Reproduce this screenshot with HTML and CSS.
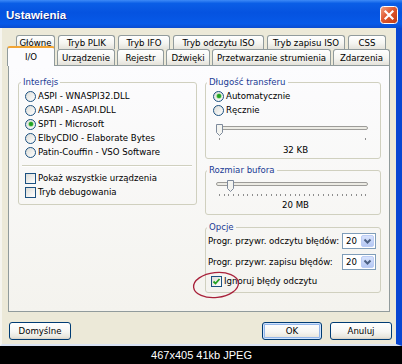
FILE: index.html
```html
<!DOCTYPE html>
<html lang="pl">
<head>
<meta charset="utf-8">
<title>Ustawienia</title>
<link rel="stylesheet" href="styles.css">
</head>
<body>
<div class="shot">
  <div class="window">
    <div class="titlebar">
      <span class="title">Ustawienia</span>
      <svg class="close" width="18" height="18" viewBox="0 0 18 18">
        <defs>
          <linearGradient id="cg" x1="0" y1="0" x2="1" y2="1">
            <stop offset="0" stop-color="#F3A586"/>
            <stop offset="0.45" stop-color="#E0582F"/>
            <stop offset="1" stop-color="#BE3912"/>
          </linearGradient>
        </defs>
        <rect x="0.5" y="0.5" width="17" height="17" rx="3" fill="url(#cg)" stroke="#FFFFFF"/>
        <path d="M5.5 5.5 L12.5 12.5 M12.5 5.5 L5.5 12.5" stroke="#FFFFFF" stroke-width="2.2" stroke-linecap="square"/>
      </svg>
    </div>
    <div class="frame">
      <div class="tabrow back">
        <div class="tab t-glowne">Główne</div>
        <div class="tab t-plik">Tryb PLIK</div>
        <div class="tab t-ifo">Tryb IFO</div>
        <div class="tab t-odczyt">Tryb odczytu ISO</div>
        <div class="tab t-zapis">Tryb zapisu ISO</div>
        <div class="tab t-css">CSS</div>
      </div>
      <div class="tabrow front">
        <div class="tab sel t-io">I/O</div>
        <div class="tab t-urz">Urządzenie</div>
        <div class="tab t-rej">Rejestr</div>
        <div class="tab t-dzw">Dźwięki</div>
        <div class="tab t-prz">Przetwarzanie strumienia</div>
        <div class="tab t-zda">Zdarzenia</div>
      </div>
      <div class="panel">
        <fieldset class="group g-interfejs">
          <legend>Interfejs</legend>
          <div class="content">
            <div class="opt"><span class="radio"></span>ASPI - WNASPI32.DLL</div>
            <div class="opt"><span class="radio"></span>ASAPI - ASAPI.DLL</div>
            <div class="opt"><span class="radio on"></span>SPTI - Microsoft</div>
            <div class="opt"><span class="radio"></span>ElbyCDIO - Elaborate Bytes</div>
            <div class="opt"><span class="radio"></span>Patin-Couffin - VSO Software</div>
            <div class="sep"></div>
            <div class="opt"><span class="check"></span>Pokaż wszystkie urządzenia</div>
            <div class="opt"><span class="check"></span>Tryb debugowania</div>
          </div>
        </fieldset>
        <div class="rightcol">
          <fieldset class="group g-transfer">
            <legend>Długość transferu</legend>
            <div class="content">
              <div class="opt"><span class="radio on"></span>Automatycznie</div>
              <div class="opt"><span class="radio"></span>Ręcznie</div>
              <div class="slider">
                <div class="track"></div>
                <div class="ticks ends"></div>
                <svg class="thumb" style="left:0px" width="7" height="12" viewBox="0 0 7 12"><path d="M0.5 0.5 H6.5 V8.5 L3.5 11.5 L0.5 8.5 Z" fill="#F4F4F0" stroke="#7E8A9C"/></svg>
              </div>
              <div class="value">32 KB</div>
            </div>
          </fieldset>
          <fieldset class="group g-bufor">
            <legend>Rozmiar bufora</legend>
            <div class="content">
              <div class="slider">
                <div class="track"></div>
                <div class="ticks many"></div>
                <svg class="thumb" style="left:11px" width="7" height="12" viewBox="0 0 7 12"><path d="M0.5 0.5 H6.5 V8.5 L3.5 11.5 L0.5 8.5 Z" fill="#F4F4F0" stroke="#7E8A9C"/></svg>
              </div>
              <div class="value">20 MB</div>
            </div>
          </fieldset>
          <fieldset class="group g-opcje">
            <legend>Opcje</legend>
            <div class="content">
              <div class="row">
                <span>Progr. przywr. odczytu błędów:</span>
                <span class="combo"><span class="cval">20</span><span class="cbtn"><svg width="11" height="12" viewBox="0 0 11 12"><path d="M2.5 4.5 L5.5 7.5 L8.5 4.5" fill="none" stroke="#4D6185" stroke-width="2"/></svg></span></span>
              </div>
              <div class="row">
                <span>Progr. przywr. zapisu błędów:</span>
                <span class="combo"><span class="cval">20</span><span class="cbtn"><svg width="11" height="12" viewBox="0 0 11 12"><path d="M2.5 4.5 L5.5 7.5 L8.5 4.5" fill="none" stroke="#4D6185" stroke-width="2"/></svg></span></span>
              </div>
              <div class="opt ign"><span class="check"><svg width="9" height="9" viewBox="0 0 9 9"><path d="M1.5 4.5 L3.5 6.5 L7.5 2" fill="none" stroke="#21A121" stroke-width="1.8"/></svg></span>Ignoruj błędy odczytu</div>
            </div>
            <svg class="mark" width="48" height="30" viewBox="0 0 48 30"><ellipse cx="24" cy="15" rx="22.5" ry="12.5" transform="rotate(-6 24 15)" fill="none" stroke="#A8213A" stroke-width="1.3"/></svg>
          </fieldset>
        </div>
      </div>
      <div class="buttons">
        <div class="btn b-def">Domyślne</div>
        <div class="spacer"></div>
        <div class="btn b-ok">OK</div>
        <div class="btn b-cancel">Anuluj</div>
      </div>
    </div>
  </div>
  <div class="caption">467x405 41kb JPEG</div>
</div>
</body>
</html>
```

FILE: styles.css
```css
* { box-sizing: border-box; }
html, body { margin: 0; padding: 0; }
body {
  width: 402px;
  height: 364px;
  overflow: hidden;
  background: #000;
  font-family: "DejaVu Sans", Tahoma, sans-serif;
  font-size: 8.6px;
  color: #000;
}
.shot { width: 402px; height: 364px; display: flex; flex-direction: column; }
.window { height: 346px; display: flex; flex-direction: column; }

.titlebar {
  height: 28px;
  flex: none;
  display: flex;
  align-items: center;
  justify-content: space-between;
  padding: 1px 5px 0 5px;
  background: linear-gradient(#3D8AF7 0%, #0A5EE6 12%, #0553E0 45%, #0759E8 85%, #0A4CD0 100%);
}
.title {
  color: #fff;
  font-family: "Liberation Sans", Arial, sans-serif;
  font-weight: bold;
  font-size: 11.5px;
  text-shadow: 1px 1px 0 #0A2A8C;
  padding-left: 1px;
}
.close { display: block; margin-right: -1px; }

.frame {
  flex: 1;
  display: flex;
  flex-direction: column;
  background: #ECE9D8;
  padding: 7px 0 4px 0;
  border-left: 2px solid #F6F5EF;
  border-right: 6px solid #0846D2;
  border-bottom: 2px solid #D9E3F5;
}

.tabrow { display: flex; }
.tabrow.back { height: 14px; padding-left: 14px; gap: 3px; }
.tabrow.front { height: 16px; padding-left: 5px; gap: 2px; }
.tab {
  flex: none;
  height: 100%;
  border: 1px solid #919B9C;
  border-bottom: none;
  border-radius: 3px 3px 0 0;
  background: linear-gradient(#FFFFFF, #F5F5F1 55%, #E4E2DA);
  display: flex;
  align-items: center;
  justify-content: center;
  white-space: nowrap;
}
.tab.sel {
  height: 20px;
  margin-top: -3px;
  margin-bottom: -1px;
  border-top: 2px solid #F2A534;
  background: #FCFCFE;
  position: relative;
  z-index: 1;
  padding-bottom: 1px;
}
.t-glowne { width: 39px; }
.t-plik { width: 57px; }
.t-ifo { width: 52px; }
.t-odczyt { width: 91px; }
.t-zapis { width: 78px; }
.t-css { width: 38px; }
.t-io { width: 48px; }
.t-urz { width: 58px; }
.t-rej { width: 47px; }
.t-dzw { width: 44px; }
.t-prz { width: 119px; }
.t-zda { width: 57px; }

.panel {
  margin-left: 6px;
  width: 382px;
  height: 247px;
  border: 1px solid #919B9C;
  background: linear-gradient(#FCFCFE, #F4F3EE);
  padding: 10px 8px 0 9px;
  display: flex;
  align-items: flex-start;
  gap: 8px;
}

.group {
  margin: 0;
  padding: 0;
  min-width: 0;
  border: 1px solid #D0D0BF;
  border-radius: 3px;
}
.group legend {
  padding: 0 2px;
  margin-left: 1px;
  line-height: 12px;
  color: #1A3A94;
}
.g-interfejs { width: 179px; }
.g-interfejs legend { margin-left: 2px; }
.g-interfejs .content { padding: 1px 0 5px 6px; }
.opt { height: 14px; display: flex; align-items: center; white-space: nowrap; }
.sep {
  height: 2px;
  margin: 6px 4px 4px -3px;
  border-top: 1px solid #D0D0BF;
  border-bottom: 1px solid #FFFFFF;
}

.radio {
  flex: none;
  width: 11px;
  height: 11px;
  border-radius: 50%;
  border: 1px solid #1C5180;
  background: linear-gradient(135deg, #DCDCD7, #FFFFFF);
  margin-right: 2px;
  position: relative;
}
.radio.on::after {
  content: "";
  position: absolute;
  left: 2.5px;
  top: 2.5px;
  width: 4px;
  height: 4px;
  border-radius: 50%;
  background: #21A121;
  box-shadow: 0 0 0 0.6px #7BD37B;
}
.check {
  flex: none;
  width: 11px;
  height: 11px;
  border: 1px solid #1C5180;
  background: linear-gradient(135deg, #DCDCD7, #FFFFFF);
  margin-right: 2px;
  display: flex;
  align-items: center;
  justify-content: center;
}
.check svg { display: block; }

.rightcol { width: 176px; display: flex; flex-direction: column; }
.g-transfer .content { padding: 1px 0 2px 7px; }
.g-bufor { margin-top: 5px; }
.g-bufor .content { padding: 1px 0 3px 7px; }
.g-opcje { margin-top: 6px; position: relative; }
.g-opcje .content { padding: 0 4px 4px 2px; }

.slider {
  position: relative;
  height: 20px;
  width: 152px;
  margin-left: 3px;
}
.g-transfer .slider { margin-top: 4px; }
.track {
  position: absolute;
  left: 0;
  right: 0;
  top: 5px;
  height: 4px;
  border: 1px solid #9D9C99;
  border-radius: 2px;
  background: #ECEBE4;
}
.ticks {
  position: absolute;
  left: 3px;
  width: 147px;
  top: 17px;
  height: 2px;
}
.ticks.ends { border-left: 1px solid #8E8E8E; border-right: 1px solid #8E8E8E; }
.ticks.many {
  background: repeating-linear-gradient(to right, #8E8E8E 0 1px, transparent 1px 4.72px);
  width: 148px;
}
.thumb { position: absolute; top: 3px; display: block; }
.value { height: 12px; line-height: 12px; text-align: center; margin-top: 3px; padding-right: 2px; }
.g-bufor .value { margin-top: 2px; }

.row { display: flex; align-items: center; justify-content: space-between; height: 16px; white-space: nowrap; }
.row + .row { margin-top: 5px; }
.combo {
  width: 34px;
  height: 16px;
  border: 1px solid #7F9DB9;
  background: #fff;
  display: flex;
  align-items: center;
  justify-content: space-between;
  padding: 1px;
}
.cval { padding-left: 2px; }
.cbtn {
  width: 13px;
  height: 12px;
  border: 1px solid #BCCDF5;
  border-radius: 2px;
  background: linear-gradient(#D7E2FC, #B5C8F4);
  display: flex;
  align-items: center;
  justify-content: center;
}
.cbtn svg { display: block; }
.ign { margin-top: 4px; }
.ign .check { margin-left: 3px; }
.mark { position: absolute; left: -14px; top: 37px; }

.buttons { display: flex; margin-top: 10px; height: 18px; padding: 0 0 0 7px; gap: 8px; }
.spacer { flex: 1; }
.btn {
  flex: none;
  height: 18px;
  border: 1px solid #003C74;
  border-radius: 3px;
  background: linear-gradient(#FFFFFF 0%, #F6F6F3 55%, #E8E6DD 88%, #D6D0C5 100%);
  display: flex;
  align-items: center;
  justify-content: center;
}
.b-def { width: 62px; }
.b-ok { width: 60px; box-shadow: inset 0 0 0 1px #CFE3FD, inset 0 0 0 2px #93B6EA; }
.b-cancel { width: 62px; margin-right: 4px; }

.caption {
  height: 18px;
  line-height: 18px;
  text-align: center;
  color: #FFFFFF;
  font-family: "Liberation Sans", Arial, sans-serif;
  font-size: 11px;
  padding-left: 1px;
}
```
